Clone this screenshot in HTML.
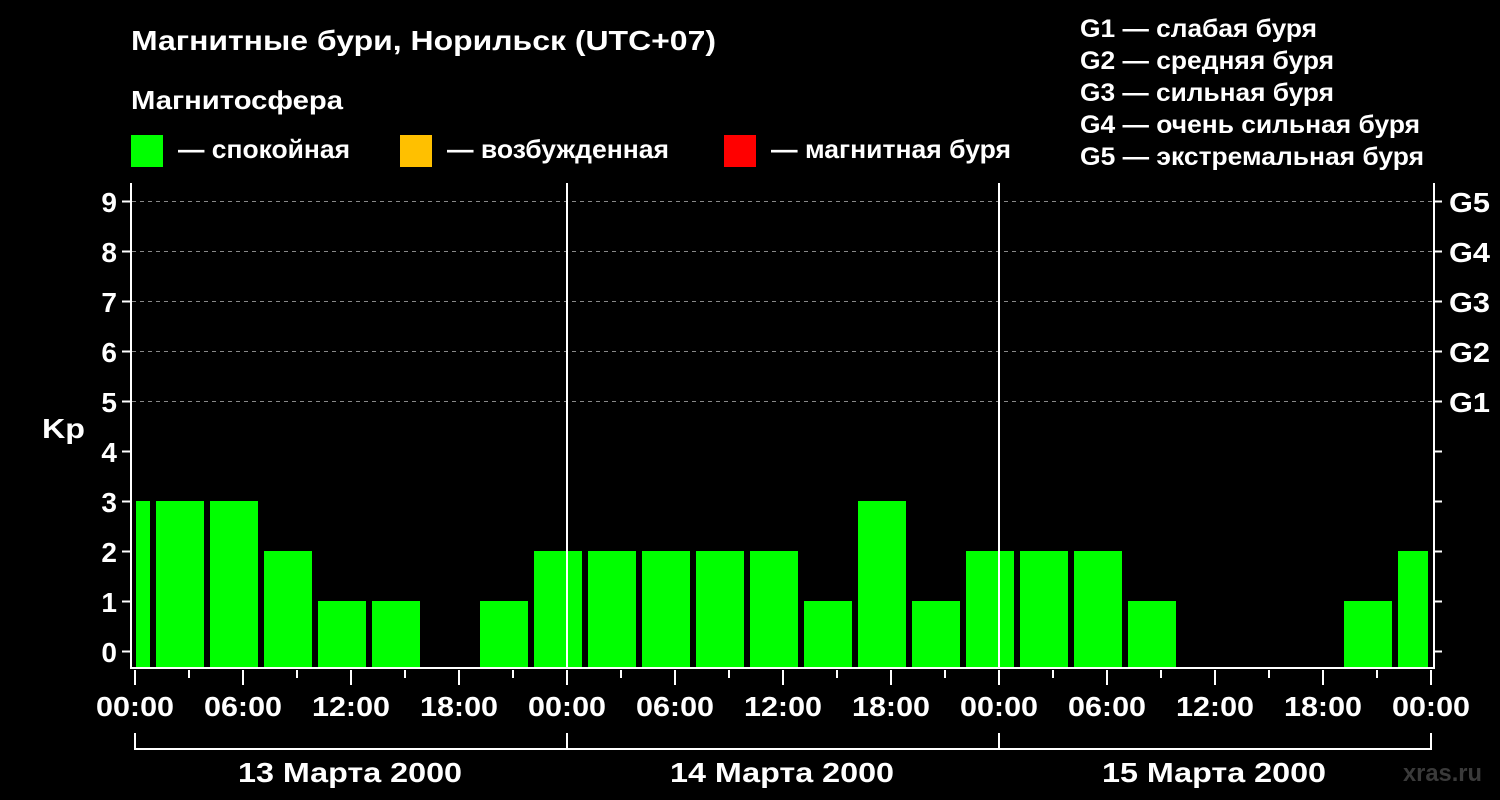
<!DOCTYPE html>
<html><head><meta charset="utf-8"><style>
html,body{margin:0;padding:0;background:#000;width:1500px;height:800px;overflow:hidden}
svg{display:block}
text{font-family:"Liberation Sans",sans-serif;font-weight:bold;fill:#fff}
</style></head><body>
<svg width="1500" height="800" viewBox="0 0 1500 800">
<rect width="1500" height="800" fill="#000"/>
<text x="131" y="50" font-size="28" textLength="585" lengthAdjust="spacingAndGlyphs">Магнитные бури, Норильск (UTC+07)</text>
<text x="131" y="109" font-size="26" textLength="212" lengthAdjust="spacingAndGlyphs">Магнитосфера</text>
<rect x="131" y="135" width="32" height="32" fill="#00ff00"/>
<text x="178" y="158" font-size="26" textLength="172" lengthAdjust="spacingAndGlyphs">— спокойная</text>
<rect x="400" y="135" width="32" height="32" fill="#ffc000"/>
<text x="447" y="158" font-size="26" textLength="222" lengthAdjust="spacingAndGlyphs">— возбужденная</text>
<rect x="724" y="135" width="32" height="32" fill="#ff0000"/>
<text x="771" y="158" font-size="26" textLength="240" lengthAdjust="spacingAndGlyphs">— магнитная буря</text>
<g font-size="25">
<text x="1080" y="37" textLength="237" lengthAdjust="spacingAndGlyphs">G1 — слабая буря</text>
<text x="1080" y="69" textLength="254" lengthAdjust="spacingAndGlyphs">G2 — средняя буря</text>
<text x="1080" y="101" textLength="254" lengthAdjust="spacingAndGlyphs">G3 — сильная буря</text>
<text x="1080" y="133" textLength="340" lengthAdjust="spacingAndGlyphs">G4 — очень сильная буря</text>
<text x="1080" y="165" textLength="344" lengthAdjust="spacingAndGlyphs">G5 — экстремальная буря</text>
</g>
<g stroke="#888" stroke-width="1" stroke-dasharray="4,4">
<line x1="132" y1="201.5" x2="1434" y2="201.5"/>
<line x1="132" y1="251.5" x2="1434" y2="251.5"/>
<line x1="132" y1="301.5" x2="1434" y2="301.5"/>
<line x1="132" y1="351.5" x2="1434" y2="351.5"/>
<line x1="132" y1="401.5" x2="1434" y2="401.5"/>
</g>
<g fill="#00ff00">
<rect x="136" y="501" width="14" height="167"/>
<rect x="156" y="501" width="48" height="167"/>
<rect x="210" y="501" width="48" height="167"/>
<rect x="264" y="551" width="48" height="117"/>
<rect x="318" y="601" width="48" height="67"/>
<rect x="372" y="601" width="48" height="67"/>
<rect x="480" y="601" width="48" height="67"/>
<rect x="534" y="551" width="48" height="117"/>
<rect x="588" y="551" width="48" height="117"/>
<rect x="642" y="551" width="48" height="117"/>
<rect x="696" y="551" width="48" height="117"/>
<rect x="750" y="551" width="48" height="117"/>
<rect x="804" y="601" width="48" height="67"/>
<rect x="858" y="501" width="48" height="167"/>
<rect x="912" y="601" width="48" height="67"/>
<rect x="966" y="551" width="48" height="117"/>
<rect x="1020" y="551" width="48" height="117"/>
<rect x="1074" y="551" width="48" height="117"/>
<rect x="1128" y="601" width="48" height="67"/>
<rect x="1344" y="601" width="48" height="67"/>
<rect x="1398" y="551" width="30" height="117"/>
</g>
<g stroke="#fff" stroke-width="2" fill="none">
<polyline points="131,183 131,668 1434,668 1434,183"/>
<line x1="567" y1="183" x2="567" y2="668"/>
<line x1="999" y1="183" x2="999" y2="668"/>
</g>
<g stroke="#fff" stroke-width="2">
<line x1="122" y1="201.5" x2="131" y2="201.5"/><line x1="122" y1="251.5" x2="131" y2="251.5"/>
<line x1="122" y1="301.5" x2="131" y2="301.5"/><line x1="122" y1="351.5" x2="131" y2="351.5"/>
<line x1="122" y1="401.5" x2="131" y2="401.5"/><line x1="122" y1="451.5" x2="131" y2="451.5"/>
<line x1="122" y1="501.5" x2="131" y2="501.5"/><line x1="122" y1="551.5" x2="131" y2="551.5"/>
<line x1="122" y1="601.5" x2="131" y2="601.5"/><line x1="122" y1="651.5" x2="131" y2="651.5"/>
<line x1="1434" y1="201.5" x2="1442" y2="201.5"/><line x1="1434" y1="251.5" x2="1442" y2="251.5"/>
<line x1="1434" y1="301.5" x2="1442" y2="301.5"/><line x1="1434" y1="351.5" x2="1442" y2="351.5"/>
<line x1="1434" y1="401.5" x2="1442" y2="401.5"/><line x1="1434" y1="451.5" x2="1442" y2="451.5"/>
<line x1="1434" y1="501.5" x2="1442" y2="501.5"/><line x1="1434" y1="551.5" x2="1442" y2="551.5"/>
<line x1="1434" y1="601.5" x2="1442" y2="601.5"/><line x1="1434" y1="651.5" x2="1442" y2="651.5"/>
</g>
<g stroke="#fff" stroke-width="2">
<line x1="135" y1="670" x2="135" y2="685"/><line x1="189" y1="670" x2="189" y2="678"/>
<line x1="243" y1="670" x2="243" y2="685"/><line x1="297" y1="670" x2="297" y2="678"/>
<line x1="351" y1="670" x2="351" y2="685"/><line x1="405" y1="670" x2="405" y2="678"/>
<line x1="459" y1="670" x2="459" y2="685"/><line x1="513" y1="670" x2="513" y2="678"/>
<line x1="567" y1="670" x2="567" y2="685"/><line x1="621" y1="670" x2="621" y2="678"/>
<line x1="675" y1="670" x2="675" y2="685"/><line x1="729" y1="670" x2="729" y2="678"/>
<line x1="783" y1="670" x2="783" y2="685"/><line x1="837" y1="670" x2="837" y2="678"/>
<line x1="891" y1="670" x2="891" y2="685"/><line x1="945" y1="670" x2="945" y2="678"/>
<line x1="999" y1="670" x2="999" y2="685"/><line x1="1053" y1="670" x2="1053" y2="678"/>
<line x1="1107" y1="670" x2="1107" y2="685"/><line x1="1161" y1="670" x2="1161" y2="678"/>
<line x1="1215" y1="670" x2="1215" y2="685"/><line x1="1269" y1="670" x2="1269" y2="678"/>
<line x1="1323" y1="670" x2="1323" y2="685"/><line x1="1377" y1="670" x2="1377" y2="678"/>
<line x1="1431" y1="670" x2="1431" y2="685"/>
<polyline fill="none" points="135,733 135,749 1431,749 1431,733"/>
<line x1="567" y1="733" x2="567" y2="749"/><line x1="999" y1="733" x2="999" y2="749"/>
</g>
<g font-size="28" text-anchor="end">
<text x="117" y="212">9</text><text x="117" y="262">8</text><text x="117" y="312">7</text>
<text x="117" y="362">6</text><text x="117" y="412">5</text><text x="117" y="462">4</text>
<text x="117" y="512">3</text><text x="117" y="562">2</text><text x="117" y="612">1</text>
<text x="117" y="662">0</text>
</g>
<text x="42" y="438" font-size="28" textLength="43" lengthAdjust="spacingAndGlyphs">Kp</text>
<g font-size="28">
<text x="1449" y="212" textLength="41" lengthAdjust="spacingAndGlyphs">G5</text><text x="1449" y="262" textLength="41" lengthAdjust="spacingAndGlyphs">G4</text><text x="1449" y="312" textLength="41" lengthAdjust="spacingAndGlyphs">G3</text>
<text x="1449" y="362" textLength="41" lengthAdjust="spacingAndGlyphs">G2</text><text x="1449" y="412" textLength="41" lengthAdjust="spacingAndGlyphs">G1</text>
</g>
<g font-size="28" text-anchor="middle">
<text x="135" y="716" textLength="78" lengthAdjust="spacingAndGlyphs">00:00</text><text x="243" y="716" textLength="78" lengthAdjust="spacingAndGlyphs">06:00</text><text x="351" y="716" textLength="78" lengthAdjust="spacingAndGlyphs">12:00</text><text x="459" y="716" textLength="78" lengthAdjust="spacingAndGlyphs">18:00</text>
<text x="567" y="716" textLength="78" lengthAdjust="spacingAndGlyphs">00:00</text><text x="675" y="716" textLength="78" lengthAdjust="spacingAndGlyphs">06:00</text><text x="783" y="716" textLength="78" lengthAdjust="spacingAndGlyphs">12:00</text><text x="891" y="716" textLength="78" lengthAdjust="spacingAndGlyphs">18:00</text>
<text x="999" y="716" textLength="78" lengthAdjust="spacingAndGlyphs">00:00</text><text x="1107" y="716" textLength="78" lengthAdjust="spacingAndGlyphs">06:00</text><text x="1215" y="716" textLength="78" lengthAdjust="spacingAndGlyphs">12:00</text><text x="1323" y="716" textLength="78" lengthAdjust="spacingAndGlyphs">18:00</text>
<text x="1431" y="716" textLength="78" lengthAdjust="spacingAndGlyphs">00:00</text>
<text x="350" y="782" textLength="224" lengthAdjust="spacingAndGlyphs">13 Марта 2000</text>
<text x="782" y="782" textLength="224" lengthAdjust="spacingAndGlyphs">14 Марта 2000</text>
<text x="1214" y="782" textLength="224" lengthAdjust="spacingAndGlyphs">15 Марта 2000</text>
</g>
<text x="1403" y="781" font-size="24" style="fill:#3a3a3a" textLength="79" lengthAdjust="spacingAndGlyphs">xras.ru</text>
</svg>
</body></html>
